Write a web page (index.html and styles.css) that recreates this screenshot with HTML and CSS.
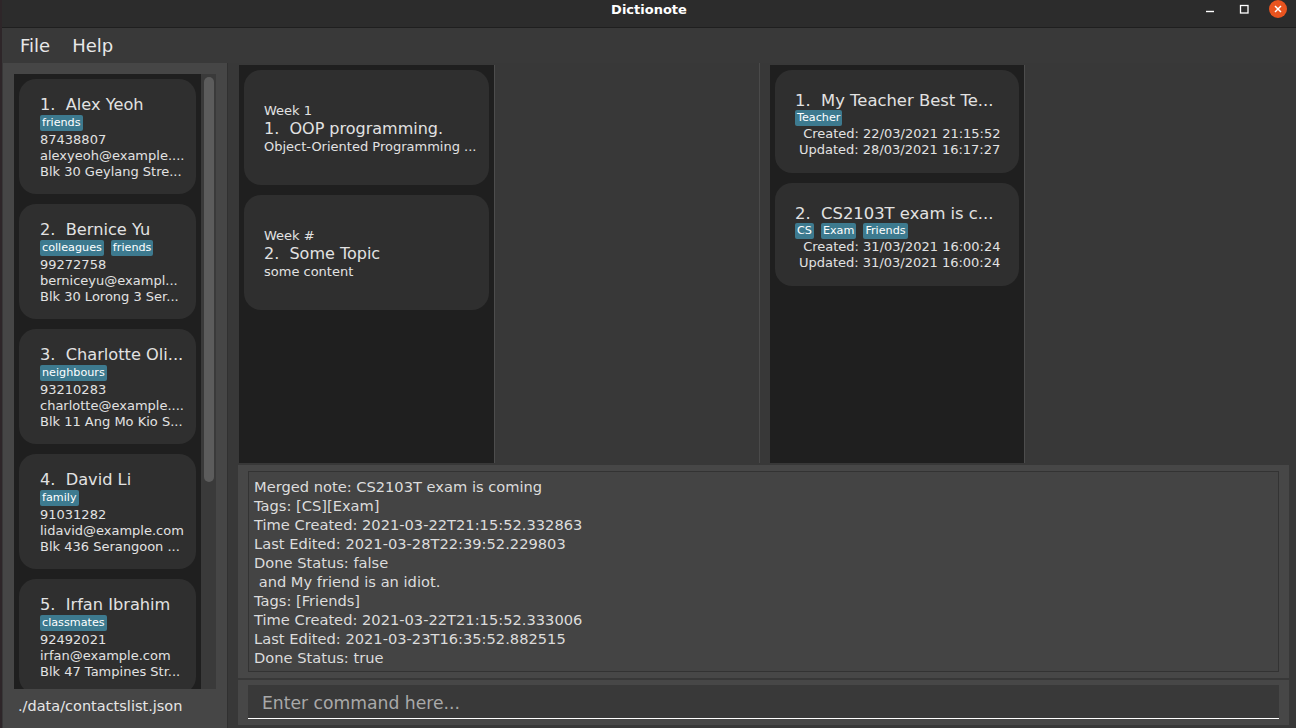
FILE: index.html
```html
<!DOCTYPE html>
<html lang="en">
<head>
<meta charset="utf-8">
<title>Dictionote</title>
<link rel="stylesheet" href="styles.css">
</head>
<body>
<div class="window">
  <header class="titlebar">
    <div class="tb-left"></div>
    <div class="title">Dictionote</div>
    <div class="controls">
      <svg width="96" height="27" viewBox="0 0 96 27" aria-hidden="true">
        <line x1="6" y1="11.5" x2="14" y2="11.5" stroke="#ffffff" stroke-width="1.4"/>
        <rect x="40.5" y="5.5" width="7.5" height="7.5" fill="none" stroke="#ffffff" stroke-width="1.3"/>
        <circle cx="78" cy="9" r="9" fill="#e9541f"/>
        <line x1="75" y1="6" x2="81" y2="12" stroke="#ffffff" stroke-width="1.5"/>
        <line x1="81" y1="6" x2="75" y2="12" stroke="#ffffff" stroke-width="1.5"/>
      </svg>
    </div>
  </header>
  <nav class="menubar">
    <span class="menu-item">File</span>
    <span class="menu-item">Help</span>
  </nav>
  <div class="main">
    <aside class="contacts-pane">
      <div class="contact-scroll">
        <div class="contact-list">
          <div class="contact-card">
            <div class="c-name">1.  Alex Yeoh</div>
            <div class="tags"><span class="tag">friends</span></div>
            <div class="c-line">87438807</div>
            <div class="c-line">alexyeoh@example....</div>
            <div class="c-line">Blk 30 Geylang Stre...</div>
          </div>
          <div class="contact-card">
            <div class="c-name">2.  Bernice Yu</div>
            <div class="tags"><span class="tag">colleagues</span><span class="tag">friends</span></div>
            <div class="c-line">99272758</div>
            <div class="c-line">berniceyu@exampl...</div>
            <div class="c-line">Blk 30 Lorong 3 Ser...</div>
          </div>
          <div class="contact-card">
            <div class="c-name">3.  Charlotte Oli...</div>
            <div class="tags"><span class="tag">neighbours</span></div>
            <div class="c-line">93210283</div>
            <div class="c-line">charlotte@example....</div>
            <div class="c-line">Blk 11 Ang Mo Kio S...</div>
          </div>
          <div class="contact-card">
            <div class="c-name">4.  David Li</div>
            <div class="tags"><span class="tag">family</span></div>
            <div class="c-line">91031282</div>
            <div class="c-line">lidavid@example.com</div>
            <div class="c-line">Blk 436 Serangoon ...</div>
          </div>
          <div class="contact-card">
            <div class="c-name">5.  Irfan Ibrahim</div>
            <div class="tags"><span class="tag">classmates</span></div>
            <div class="c-line">92492021</div>
            <div class="c-line">irfan@example.com</div>
            <div class="c-line">Blk 47 Tampines Str...</div>
          </div>
        </div>
        <div class="scrollbar"><div class="thumb"></div></div>
      </div>
      <div class="status">./data/contactslist.json</div>
    </aside>
    <div class="divider"></div>
    <section class="workspace">
      <div class="lists">
        <div class="col col-notes">
          <div class="list list-notes">
            <div class="note-card">
              <div class="n-week">Week 1</div>
              <div class="n-title">1.  OOP programming.</div>
              <div class="n-content">Object-Oriented Programming ...</div>
            </div>
            <div class="note-card">
              <div class="n-week">Week #</div>
              <div class="n-title">2.  Some Topic</div>
              <div class="n-content">some content</div>
            </div>
          </div>
        </div>
        <div class="col col-empty"></div>
        <div class="col col-dict">
          <div class="list list-dict">
            <div class="dict-card">
              <div class="d-title">1.  My Teacher Best Te...</div>
              <div class="tags"><span class="tag">Teacher</span></div>
              <div class="d-dates">
                <div class="d-line"> Created: 22/03/2021 21:15:52</div>
                <div class="d-line">Updated: 28/03/2021 16:17:27</div>
              </div>
            </div>
            <div class="dict-card">
              <div class="d-title">2.  CS2103T exam is c...</div>
              <div class="tags"><span class="tag">CS</span><span class="tag">Exam</span><span class="tag">Friends</span></div>
              <div class="d-dates">
                <div class="d-line"> Created: 31/03/2021 16:00:24</div>
                <div class="d-line">Updated: 31/03/2021 16:00:24</div>
              </div>
            </div>
          </div>
        </div>
        <div class="col col-rest"></div>
      </div>
      <div class="result">
        <div class="result-box">Merged note: CS2103T exam is coming
Tags: [CS][Exam]
Time Created: 2021-03-22T21:15:52.332863
Last Edited: 2021-03-28T22:39:52.229803
Done Status: false
 and My friend is an idiot.
Tags: [Friends]
Time Created: 2021-03-22T21:15:52.333006
Last Edited: 2021-03-23T16:35:52.882515
Done Status: true</div>
      </div>
      <div class="command">
        <div class="command-box">Enter command here...</div>
      </div>
    </section>
  </div>
</div>
</body>
</html>
```

FILE: styles.css
```css
* { box-sizing: border-box; }
html, body { margin: 0; padding: 0; }
body {
  background: #383838;
  font-family: "DejaVu Sans", "Liberation Sans", sans-serif;
  color: #e2e2e2;
}
.window {
  width: 1296px;
  height: 728px;
  overflow: hidden;
  display: flex;
  flex-direction: column;
  background: #383838;
  border-left: 2px solid #2e2629;
}

/* title bar */
.titlebar {
  height: 28px;
  flex: none;
  background: #2c2c2c;
  border-bottom: 1px solid #1f1f1f;
  display: grid;
  grid-template-columns: 1fr auto 1fr;
}
.title {
  font-weight: bold;
  font-size: 13px;
  line-height: 20px;
  color: #ffffff;
}
.controls { justify-self: end; display: flex; }
.controls svg { display: block; }

/* menu */
.menubar {
  height: 35px;
  flex: none;
  display: flex;
  align-items: center;
  gap: 22px;
  padding-left: 18px;
  font-size: 18px;
  color: #e8e8e8;
  background: #393939;
}

.main {
  flex: 1;
  display: flex;
  min-height: 0;
}

/* contacts */
.contacts-pane {
  width: 224px;
  margin-left: 1px;
  flex: none;
  background: #464646;
  padding: 11px 10px 0 11px;
  display: flex;
  flex-direction: column;
}
.contact-scroll {
  height: 615px;
  display: flex;
  flex: none;
}
.contact-list {
  width: 187px;
  background: #1f1f1f;
  padding: 5px;
  overflow: hidden;
  display: flex;
  flex-direction: column;
  gap: 10px;
}
.contact-card {
  flex: none;
  height: 115px;
  background: #2f2f2f;
  border-radius: 17px;
  padding: 16px 8px 0 21px;
  overflow: hidden;
}
.c-name {
  font-size: 16.2px;
  line-height: 19.5px;
  white-space: pre;
}
.tags {
  display: flex;
  gap: 7px;
  margin-top: 0;
  height: 16px;
}
.tag {
  background: #3d7a8f;
  color: #ffffff;
  font-size: 11.2px;
  line-height: 16px;
  height: 16px;
  padding: 0 2px;
  border-radius: 2px;
  white-space: pre;
}
.c-line {
  font-size: 13px;
  line-height: 16.4px;
  white-space: pre;
}
.contact-card .tags + .c-line { margin-top: 1px; }
.scrollbar {
  width: 15px;
  background: #3a3a3a;
  padding: 3px 2px 0 3px;
}
.thumb {
  width: 10px;
  height: 405px;
  background: #5c5c5c;
  border-radius: 5px;
}
.status {
  height: 39px;
  line-height: 34px;
  padding-left: 4px;
  font-size: 14.5px;
  color: #e6e6e6;
}

.divider {
  width: 1px;
  flex: none;
  background: #303030;
}

/* workspace */
.workspace {
  flex: 1;
  display: flex;
  flex-direction: column;
  min-width: 0;
}
.lists {
  height: 400px;
  flex: none;
  display: flex;
}
.col { height: 100%; }
.col-notes { width: 267px; padding: 2px 0 0 11px; flex: none; }
.col-empty { width: 265px; border-right: 1px solid #4a4a4a; flex: none; }
.col-dict { width: 265px; padding: 2px 0 0 10px; flex: none; }
.col-rest { flex: 1; }
.list {
  height: 398px;
  background: #1f1f1f;
  border-right: 1px solid #4d4d4d;
  padding: 5px;
  display: flex;
  flex-direction: column;
  gap: 10px;
}
.list-notes { width: 256px; }
.list-dict { width: 255px; }

.note-card {
  flex: none;
  height: 115px;
  background: #2f2f2f;
  border-radius: 17px;
  padding: 3px 10px 0 20px;
  display: flex;
  flex-direction: column;
  justify-content: center;
}
.n-week { font-size: 13px; line-height: 18px; white-space: pre; }
.n-title { font-size: 16px; line-height: 18px; white-space: pre; }
.n-content { font-size: 13px; line-height: 18px; white-space: pre; }

.dict-card {
  flex: none;
  height: 103px;
  background: #2f2f2f;
  border-radius: 17px;
  padding: 21px 10px 0 20px;
}
.d-title { font-size: 16.4px; line-height: 19px; white-space: pre; }
.dict-card .tags { margin-top: 0; }
.d-dates { padding-left: 4px; }
.d-line { font-size: 13px; line-height: 16px; white-space: pre; }

/* result */
.result {
  height: 213px;
  flex: none;
  margin: 2px 7px 0 10px;
  background: #474747;
  padding: 6px 10px;
}
.result-box {
  height: 100%;
  background: #444444;
  border: 1px solid #333333;
  padding: 5px 5px 0;
  font-size: 14.65px;
  line-height: 19px;
  color: #dcdcdc;
  white-space: pre;
  overflow: hidden;
}

/* command */
.command {
  height: 45px;
  flex: none;
  margin: 2px 7px 3px 10px;
  background: #474747;
  padding: 5px 10px 6px;
}
.command-box {
  height: 34px;
  background: #393939;
  border-bottom: 1px solid #ffffff;
  padding: 3px 0 0 14px;
  font-size: 17.2px;
  line-height: 30px;
  color: #a9a9a9;
}
```
